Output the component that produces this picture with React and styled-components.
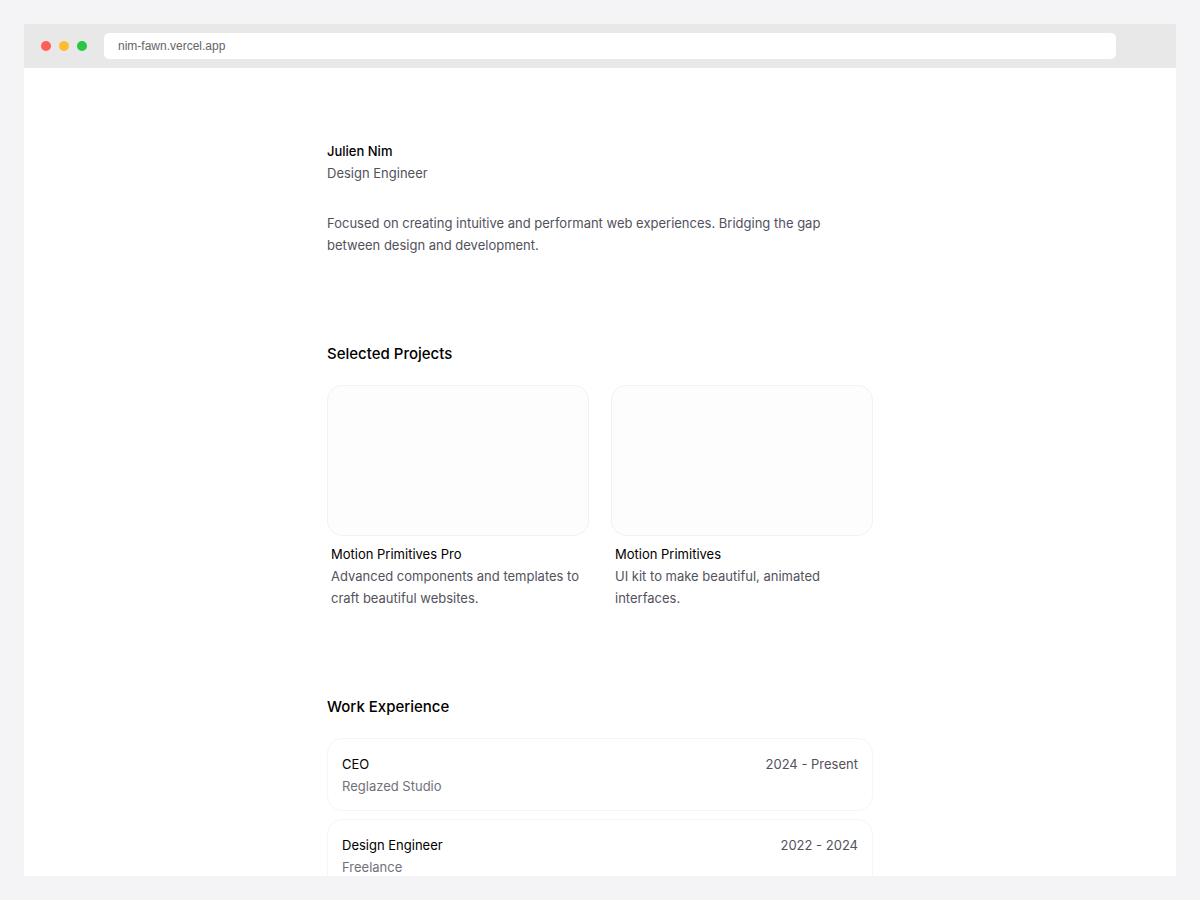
//imports

import React from "react";
import styled, { createGlobalStyle } from "styled-components";

const projects = [
  {
    name: "Motion Primitives Pro",
    description: "Advanced components and templates to craft beautiful websites.",
  },
  {
    name: "Motion Primitives",
    description: "UI kit to make beautiful, animated interfaces.",
  },
];

const jobs = [
  { title: "CEO", company: "Reglazed Studio", period: "2024 - Present" },
  { title: "Design Engineer", company: "Freelance", period: "2022 - 2024" },
];

// the browser window with the portfolio page inside
export default function App() {
  return (
    <Desktop>
      <GlobalStyle />
      <Window>
        <Toolbar>
          <Dots>
            <Dot $color="#fe5f57" />
            <Dot $color="#febc2e" />
            <Dot $color="#28c840" />
          </Dots>
          <Address
            type="text"
            aria-label="Address"
            defaultValue="nim-fawn.vercel.app"
          />
        </Toolbar>
        <Page>
          <Content>
            <header>
              <Name href="#" $weight={500}>
                Julien Nim
              </Name>
              <Text>Design Engineer</Text>
            </header>
            <Intro>
              Focused on creating intuitive and performant web experiences.
              Bridging the gap between design and development.
            </Intro>

            <Section>
              <Heading>Selected Projects</Heading>
              <Projects>
                {projects.map((project) => (
                  <article key={project.name}>
                    <Preview />
                    <Caption>
                      <Name href="#" $weight={400}>
                        {project.name}
                      </Name>
                      <Text>{project.description}</Text>
                    </Caption>
                  </article>
                ))}
              </Projects>
            </Section>

            <Section>
              <Heading>Work Experience</Heading>
              <Jobs>
                {jobs.map((job) => (
                  <Job key={job.title} href="#">
                    <div>
                      <JobTitle>{job.title}</JobTitle>
                      <Text $muted>{job.company}</Text>
                    </div>
                    <Text>{job.period}</Text>
                  </Job>
                ))}
              </Jobs>
            </Section>
          </Content>
        </Page>
      </Window>
    </Desktop>
  );
}

const GlobalStyle = createGlobalStyle`
  * {
    box-sizing: border-box;
  }
  body {
    margin: 0;
    background: #f4f4f6;
    color: #000;
    font-family: Inter, "Liberation Sans", sans-serif;
    font-size: 13px;
    line-height: 22px;
    -webkit-font-smoothing: antialiased;
  }
  h2, h3, p {
    margin: 0;
  }
`;

const Desktop = styled.div`
  display: flex;
  height: 100vh;
  padding: 24px;
`;

const Window = styled.div`
  display: flex;
  flex: 1;
  flex-direction: column;
  min-width: 0;
  overflow: hidden;
  background: #fff;
`;

const Toolbar = styled.div`
  display: flex;
  align-items: center;
  gap: 17px;
  padding: 9px 60px 9px 17px;
  background: #e8e8e8;
`;

const Dots = styled.div`
  display: flex;
  gap: 8px;
`;

const Dot = styled.span`
  width: 10px;
  height: 10px;
  border-radius: 50%;
  background: ${(props) => props.$color};
`;

const Address = styled.input`
  flex: 1;
  min-width: 0;
  height: 26px;
  padding: 0 14px;
  border: 0;
  border-radius: 5px;
  outline: none;
  background: #fff;
  color: #666;
  font-family: "Liberation Sans", Arial, sans-serif;
  font-size: 12px;
`;

const Page = styled.div`
  flex: 1;
  overflow-y: auto;
  scrollbar-width: none;
`;

const Content = styled.main`
  max-width: 576px;
  margin: 0 auto;
  padding: 72px 15px;
`;

const Name = styled.a`
  display: block;
  color: #000;
  font-weight: ${(props) => props.$weight};
  text-decoration: none;
`;

const Text = styled.p`
  color: ${(props) => (props.$muted ? "#71717b" : "#52525c")};
`;

const Intro = styled(Text)`
  margin-top: 28px;
`;

const Section = styled.section`
  margin-top: 87px;
`;

const Heading = styled.h2`
  margin-bottom: 20px;
  font-size: 15px;
  font-weight: 500;
`;

const Projects = styled.div`
  display: grid;
  grid-template-columns: 1fr 1fr;
  gap: 22px;
  @media screen and (max-width: 576px) {
    grid-template-columns: 1fr;
  }
`;

const Preview = styled.div`
  aspect-ratio: 262 / 151;
  border: 1px solid #f2f2f3;
  border-radius: 15px;
  background: #fdfdfd;
`;

const Caption = styled.div`
  margin-top: 7px;
  padding-left: 4px;
`;

const Jobs = styled.div`
  display: flex;
  flex-direction: column;
  gap: 8px;
`;

const Job = styled.a`
  display: flex;
  justify-content: space-between;
  padding: 14px 14px 13px;
  border: 1px solid #f5f5f6;
  border-radius: 15px;
  color: inherit;
  text-decoration: none;
`;

const JobTitle = styled.h3`
  font-size: 13px;
  font-weight: 400;
`;
